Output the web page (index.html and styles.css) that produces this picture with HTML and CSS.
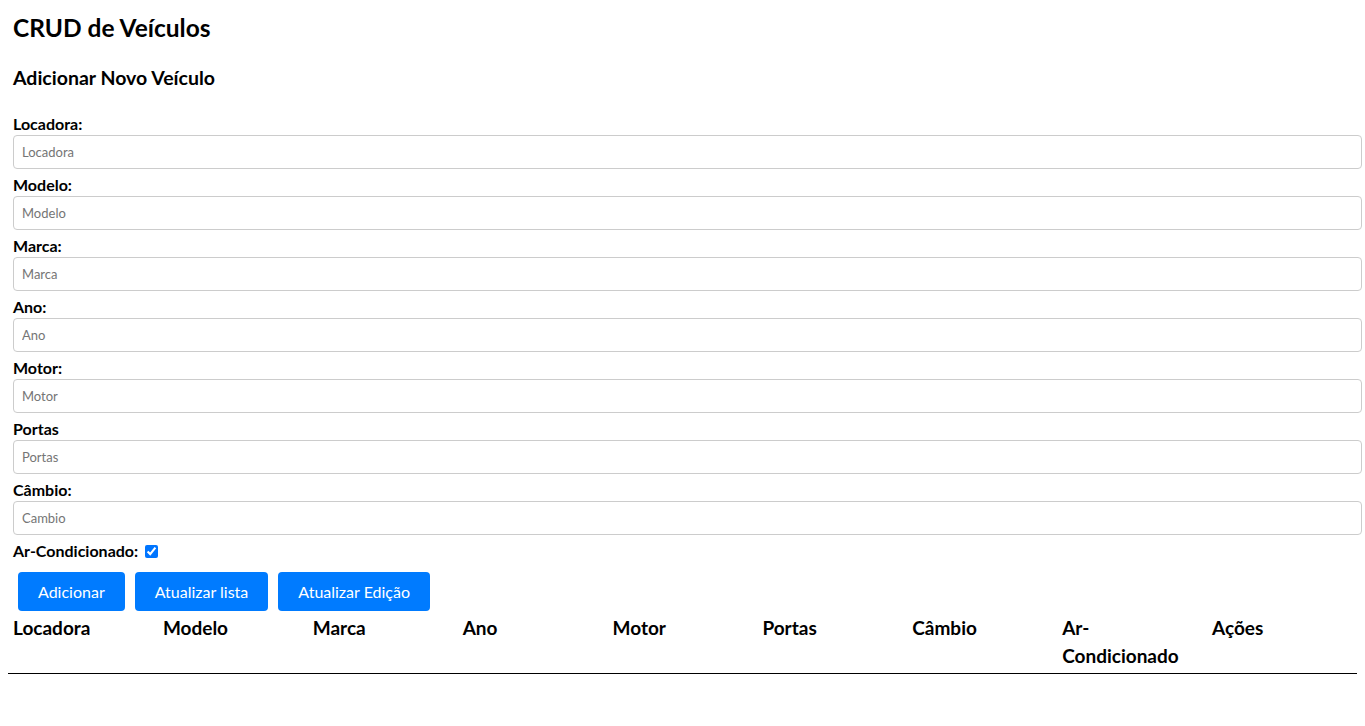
FILE: index.html
```html
<!DOCTYPE html>
<html lang="pt-BR">
<head>
<meta charset="utf-8">
<title>CRUD de Veículos</title>
<link rel="stylesheet" href="styles.css">
</head>
<body>
<div class="app">
  <h1 class="title">CRUD de Veículos</h1>
  <h3 class="subtitle">Adicionar Novo Veículo</h3>
  <form class="form">
    <label class="field-label">Locadora:</label>
    <input class="field-input" type="text" placeholder="Locadora">
    <label class="field-label">Modelo:</label>
    <input class="field-input" type="text" placeholder="Modelo">
    <label class="field-label">Marca:</label>
    <input class="field-input" type="text" placeholder="Marca">
    <label class="field-label">Ano:</label>
    <input class="field-input" type="text" placeholder="Ano">
    <label class="field-label">Motor:</label>
    <input class="field-input" type="text" placeholder="Motor">
    <label class="field-label">Portas</label>
    <input class="field-input" type="text" placeholder="Portas">
    <label class="field-label">Câmbio:</label>
    <input class="field-input" type="text" placeholder="Cambio">
    <div class="check-row">
      <label class="field-label inline">Ar-Condicionado:</label>
      <input class="check" type="checkbox" checked>
    </div>
    <div class="actions">
      <button type="button" class="btn">Adicionar</button>
      <button type="button" class="btn">Atualizar lista</button>
      <button type="button" class="btn">Atualizar Edição</button>
    </div>
  </form>
  <table class="table">
    <thead>
      <tr>
        <th>Locadora</th>
        <th>Modelo</th>
        <th>Marca</th>
        <th>Ano</th>
        <th>Motor</th>
        <th>Portas</th>
        <th>Câmbio</th>
        <th>Ar-Condicionado</th>
        <th>Ações</th>
      </tr>
    </thead>
    <tbody></tbody>
  </table>
</div>
</body>
</html>
```

FILE: styles.css
```css
* { box-sizing: border-box; }
body {
  margin: 0;
  font-family: "Lato", "Open Sans", sans-serif;
  color: #000;
  background: #fff;
}
.app {
  padding: 8px 3px 8px 8px;
}
.title {
  margin: 4px 0 0 5px;
  font-size: 24.5px;
  line-height: 32px;
  font-weight: 700;
}
.subtitle {
  margin: 22px 0 0 5px;
  font-size: 19.5px;
  line-height: 24px;
  font-weight: 700;
}
.form {
  margin: 23px 0 0 5px;
  display: flex;
  flex-direction: column;
}
.field-label {
  display: block;
  font-size: 16px;
  line-height: 22px;
  font-weight: 700;
}
.field-label.inline { display: inline; }
.field-input {
  width: 100%;
  height: 34px;
  margin: 0 0 5px 0;
  padding: 0 8px;
  border: 1px solid #ccc;
  border-radius: 4px;
  font-family: inherit;
  font-size: 13px;
  outline: none;
}
.field-input::placeholder { color: #757575; }
.check-row {
  display: flex;
  align-items: center;
  height: 22px;
  margin-bottom: 5px;
}
.check {
  width: 13px;
  height: 13px;
  margin: 0 0 0 7px;
  accent-color: #0075ff;
}
.actions {
  display: flex;
  gap: 10px;
  margin: 0 0 3px 0;
  padding: 5px 5px 0;
}
.btn {
  height: 39px;
  padding: 0 20px;
  border: none;
  border-radius: 4px;
  background: #007bff;
  color: #fff;
  font-family: "Lato", "Open Sans", sans-serif;
  font-size: 16px;
}
.table {
  width: calc(100% - 5px);
  margin: 0;
  border-collapse: collapse;
  table-layout: fixed;
}
.table thead tr { border-bottom: 1px solid #000; }
.table th {
  text-align: left;
  vertical-align: top;
  padding: 0 5px 3px;
  font-size: 19px;
  line-height: 28px;
  font-weight: 700;
}
```
